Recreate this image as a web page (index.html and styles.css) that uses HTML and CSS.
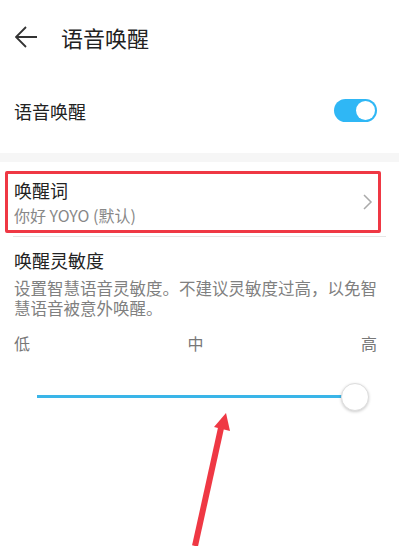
FILE: index.html
```html
<!DOCTYPE html>
<html lang="zh-CN">
<head>
<meta charset="utf-8">
<link rel="stylesheet" href="styles.css">
</head>
<body>
<div class="page">
  <header class="header">
    <svg class="back" width="22" height="22" viewBox="0 0 22 22"><path d="M11 1 L1 11 L11 21 M1 11 H22" fill="none" stroke="#333" stroke-width="1.8"/></svg>
    <h1 class="title">语音唤醒</h1>
  </header>
  <div class="row-switch">
    <span class="row-title">语音唤醒</span>
    <span class="toggle"><span class="knob"></span></span>
  </div>
  <div class="band"></div>
  <div class="wake-box">
    <div class="wake-text">
      <div class="row-title">唤醒词</div>
      <div class="sub">你好 YOYO (默认)</div>
    </div>
    <svg class="chev" width="10" height="16" viewBox="0 0 10 16"><path d="M1 1 L8 8 L1 15" fill="none" stroke="#aaa" stroke-width="1.5"/></svg>
  </div>
  <div class="divider"></div>
  <div class="section">
    <div class="row-title">唤醒灵敏度</div>
    <p class="desc">设置智慧语音灵敏度。不建议灵敏度过高，以免智慧语音被意外唤醒。</p>
    <div class="labels"><span>低</span><span>中</span><span>高</span></div>
    <div class="slider"><span class="track"></span><span class="thumb"></span></div>
  </div>
  <svg class="arrow" width="399" height="546" viewBox="0 0 399 546">
    <path d="M195 546 L221 428" stroke="#ef3844" stroke-width="6" fill="none"/>
    <path d="M226 413 L230 431 L214 427 Z" fill="#ef3844"/>
  </svg>
</div>
</body>
</html>
```
FILE: styles.css
```css
* { box-sizing: border-box; }
html, body { margin: 0; padding: 0; background: #fff; }
body { font-family: "Noto Sans CJK SC", "Noto Sans", sans-serif; color: #222; }
.page { position: relative; width: 399px; height: 546px; overflow: hidden; }
.header { height: 74px; display: flex; align-items: center; padding-left: 15px; }
.back { display: block; }
.title { margin: 0 0 0 24px; font-size: 22px; font-weight: 400; line-height: 28px; color: #222; }
.row-switch { height: 79px; padding: 0 22px 6px 14px; display: flex; align-items: center; justify-content: space-between; }
.row-title { font-size: 18px; line-height: 24px; color: #222; }
.toggle { width: 43px; height: 23px; border-radius: 12px; background: #2fb7f5; position: relative; display: block; }
.knob { position: absolute; right: 2px; top: 2px; width: 19px; height: 19px; border-radius: 50%; background: #fff; }
.band { height: 9px; background: #f6f6f6; }
.wake-box { margin: 9px 0 0 5px; width: 376px; height: 62px; border: 3px solid #ef3844; border-radius: 2px; display: flex; align-items: center; justify-content: space-between; padding: 0 5px 0 6px; }
.wake-text { display: flex; flex-direction: column; gap: 2px; }
.sub { font-size: 16px; line-height: 22px; color: #888; }
.chev { display: block; }
.divider { margin: 3px 13px 0 13px; height: 1px; background: #e6e6e6; }
.section { padding-top: 11px; }
.section .row-title { padding-left: 14px; }
.desc { margin: 6px 0 0 0; padding: 0 20px 0 14px; font-size: 16.5px; line-height: 20px; color: #808080; }
.labels { margin-top: 15px; padding: 0 22px 0 14px; display: flex; justify-content: space-between; font-size: 16px; line-height: 20px; color: #777; }
.slider { margin: 29px 0 0 37px; width: 332px; height: 30px; position: relative; }
.track { position: absolute; left: 0; right: 14px; top: 13px; height: 3px; background: #3ab5e8; }
.thumb { position: absolute; right: 0; top: 1px; width: 28px; height: 28px; border-radius: 50%; background: #fff; border: 1px solid #ddd; box-shadow: 0 1px 3px rgba(0,0,0,0.2); }
.arrow { position: absolute; left: 0; top: 0; pointer-events: none; }
```
